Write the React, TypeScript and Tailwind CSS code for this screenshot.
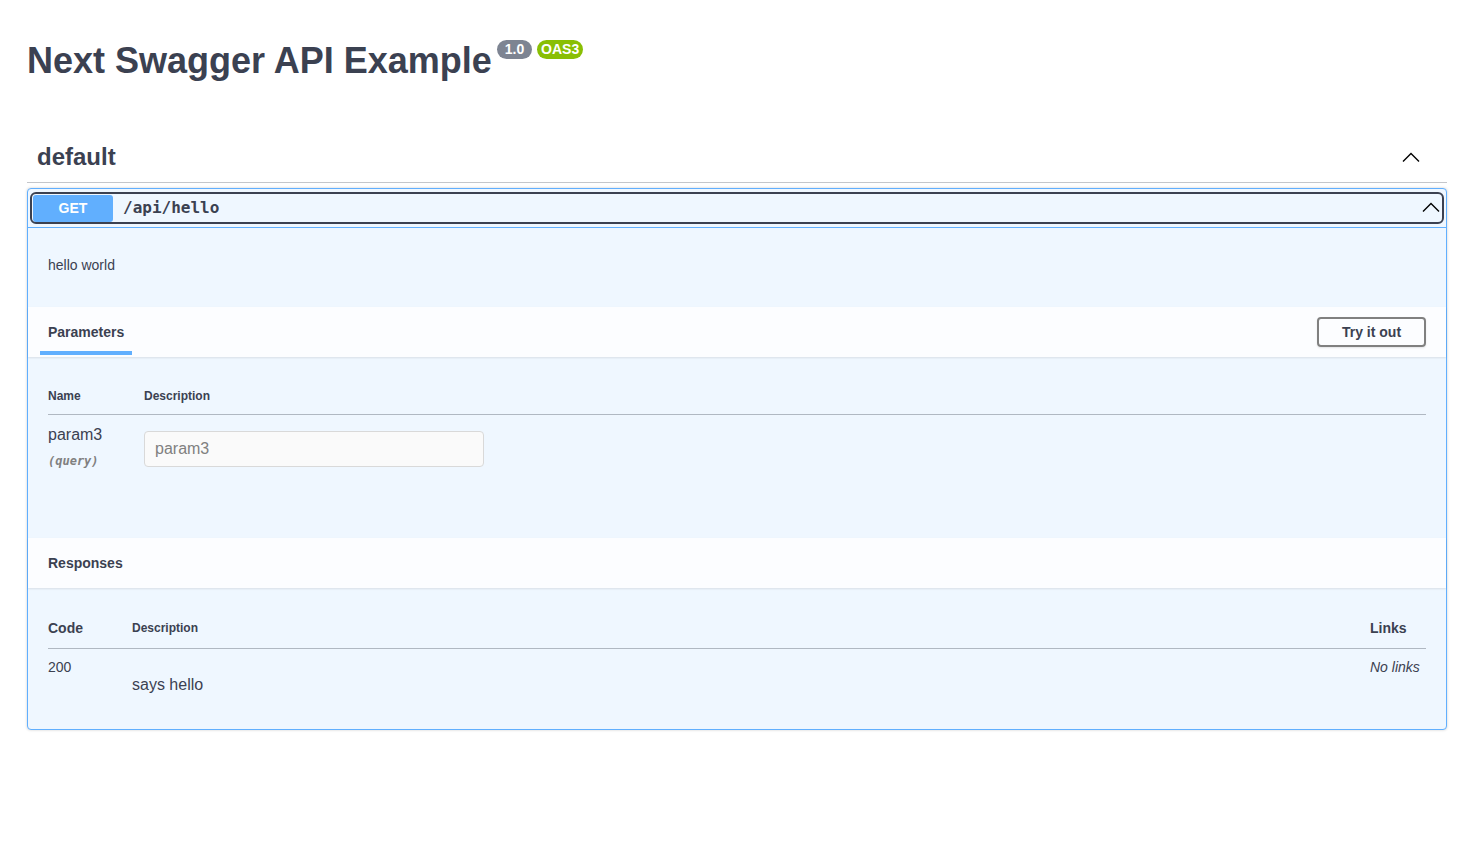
import { useState } from 'react';

const Chevron = ({ className }: { className?: string }) => (
  <svg viewBox="0 0 20 20" width={20} height={20} className={className}>
    <polyline points="2,13.5 10,5.6 18,13.5" fill="none" stroke="#000" strokeWidth={1.4} strokeLinejoin="miter" />
  </svg>
);

export default function App() {
  const [value, setValue] = useState('');

  return (
    <div className="min-h-screen bg-white text-[#3b4151] font-['Liberation_Sans',Arial,sans-serif]">
      <div className="pl-[27px] pr-[18px]">
        {/* Title */}
        <div className="pt-[40px] flex items-start">
          <h2 className="text-[36px] leading-[42px] font-bold text-[#3b4151]">Next Swagger API Example</h2>
          <span className="ml-[5px] h-[19px] px-[4px] rounded-full bg-[#7d8492] text-white text-[14px] font-bold leading-[19px] whitespace-pre">
            {' 1.0 '}
          </span>
          <span className="ml-[5px] h-[19px] px-[4px] rounded-full bg-[#89bf04] text-white text-[14px] font-bold leading-[19px]">
            OAS3
          </span>
        </div>

        {/* Tag */}
        <div className="mt-[51px] flex items-center justify-between h-[50px] pl-[10px] pr-[26px] border-b border-[rgba(59,65,81,0.3)]">
          <h3 className="text-[24px] font-bold leading-[28px] -mt-[2px]">default</h3>
          <Chevron />
        </div>

        {/* Operation */}
        <div className="mt-[5px] border border-[#61affe] rounded-[4px] bg-[#eff7ff] shadow-[0_0_3px_rgba(0,0,0,0.19)]">
          <div className="p-[5px] border-b border-[#61affe]">
            <div className="flex items-center h-[28px] outline-2 outline-[#3b4151] rounded-[4px] -mx-px">
              <span className="w-[80px] h-[27px] ml-px flex items-center justify-center bg-[#61affe] text-white text-[14px] font-bold rounded-[3px]">
                GET
              </span>
              <span className="ml-[10px] font-['DejaVu_Sans_Mono',monospace] text-[16px] font-bold text-[#3b4151]">/api/hello</span>
              <span className="flex-1" />
              <Chevron className="mr-px" />
            </div>
          </div>

          {/* Description */}
          <div className="h-[79px] px-[20px] pt-[29px] text-[14px] leading-[16px]">hello world</div>

          {/* Parameters header */}
          <div className="h-[50px] px-[20px] flex items-center justify-between bg-[#fcfdff] shadow-[0_1px_2px_rgba(0,0,0,0.1)]">
            <div className="relative h-full flex items-center">
              <h4 className="text-[14px] font-bold">Parameters</h4>
              <span className="absolute left-[-8px] right-[-8px] bottom-[2px] h-[4px] bg-[#61affe]" />
            </div>
            <button className="h-[30px] w-[109px] border-2 border-[#808080] rounded-[4px] text-[14px] font-bold text-[#3b4151] shadow-[0_1px_2px_rgba(0,0,0,0.1)]">
              Try it out
            </button>
          </div>

          {/* Parameters table */}
          <div className="h-[181px] px-[20px] pt-[20px]">
            <div className="flex h-[38px] items-center border-b border-[rgba(59,65,81,0.35)] text-[12px] font-bold">
              <span className="w-[96px]">Name</span>
              <span>Description</span>
            </div>
            <div className="flex pt-[10px]">
              <div className="w-[96px]">
                <div className="text-[16px] leading-[19px]">param3</div>
                <div className="mt-[10px] font-['DejaVu_Sans_Mono',monospace] text-[12px] italic font-bold text-[#808080] leading-[14px]">
                  (query)
                </div>
              </div>
              <input
                value={value}
                onChange={(e) => setValue(e.target.value)}
                placeholder="param3"
                className="mt-[6px] w-[340px] h-[36px] px-[10px] border border-[#d9d9d9] rounded-[4px] bg-[#fafafa] text-[16px] placeholder:text-[#808080] outline-none"
              />
            </div>
          </div>

          {/* Responses header */}
          <div className="h-[50px] px-[20px] flex items-center bg-[#fcfdff] shadow-[0_1px_2px_rgba(0,0,0,0.1)]">
            <h4 className="text-[14px] font-bold">Responses</h4>
          </div>

          {/* Responses table */}
          <div className="h-[141px] px-[20px] pt-[20px]">
            <div className="flex h-[41px] items-center border-b border-[rgba(59,65,81,0.35)] font-bold">
              <span className="w-[84px] text-[14px]">Code</span>
              <span className="flex-1 text-[12px]">Description</span>
              <span className="w-[56px] text-[14px]">Links</span>
            </div>
            <div className="flex pt-[10px]">
              <span className="w-[84px] text-[14px] leading-[16px]">200</span>
              <div className="flex-1 pt-[16px] text-[16px] leading-[19px]">says hello</div>
              <span className="w-[56px] text-[14px] leading-[16px] italic">No links</span>
            </div>
          </div>
        </div>
      </div>
    </div>
  );
}
